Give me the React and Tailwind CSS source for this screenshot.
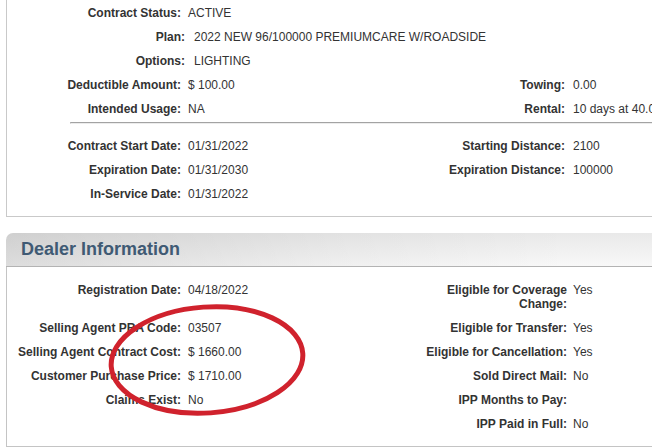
import React from "react";

const font = { fontFamily: '"Liberation Sans", Arial, sans-serif' };

function TopRow({ label, value, label2, value2, wide }) {
  return (
    <div className="flex h-[24px] items-start pt-[5px] leading-[14px] whitespace-nowrap">
      <div className={`${wide ? "w-[178px]" : "w-[174px]"} shrink-0 text-right font-bold`}>{label}</div>
      <div className={`${wide ? "w-[233px] pl-[9px]" : "w-[237px] pl-[7px]"} shrink-0`}>{value}</div>
      {label2 !== undefined && (
        <>
          <div className="w-[147px] shrink-0 text-right font-bold">{label2}</div>
          <div className="pl-[8px]">{value2}</div>
        </>
      )}
    </div>
  );
}

function DealerRow({ label, value, label2, value2 }) {
  return (
    <div className="flex items-start py-[5px] leading-[14px]">
      <div className="w-[174px] shrink-0 text-right font-bold whitespace-nowrap">{label}</div>
      <div className="w-[244px] shrink-0 pl-[7px] whitespace-nowrap">{value}</div>
      <div className="w-[142px] shrink-0 text-right font-bold">{label2}</div>
      <div className="pl-[6px] whitespace-nowrap">{value2}</div>
    </div>
  );
}

export default function App() {
  return (
    <div className="relative h-[448px] w-[652px] overflow-hidden bg-white text-[12px] text-[#333]" style={font}>
      <div className="w-[760px] pl-[6px]">
        {/* contract details panel */}
        <div className="border-b border-l border-[#c9c9c9] pt-[1px] pb-[10px]">
          <TopRow label="Contract Status:" value="ACTIVE" />
          <TopRow wide label="Plan:" value="2022 NEW 96/100000 PREMIUMCARE W/ROADSIDE" />
          <TopRow wide label="Options:" value="LIGHTING" />
          <TopRow label="Deductible Amount:" value="$ 100.00" label2="Towing:" value2="0.00" />
          <TopRow label="Intended Usage:" value="NA" label2="Rental:" value2="10 days at 40.00" />
          <div className="ml-[63px] mt-[1px] h-[2px] border-t border-l border-t-[#a3a3a3] border-l-[#c4c4c4] border-b border-b-[#ececec]" />
          <div className="h-[10px]" />
          <TopRow label="Contract Start Date:" value="01/31/2022" label2="Starting Distance:" value2="2100" />
          <TopRow label="Expiration Date:" value="01/31/2030" label2="Expiration Distance:" value2="100000" />
          <TopRow label="In-Service Date:" value="01/31/2022" />
        </div>

        {/* dealer panel */}
        <div className="mt-[16px]">
          <div className="flex h-[34px] items-center rounded-tl-[7px] border-b border-[#b3b3b3] bg-[linear-gradient(to_right,rgba(0,0,0,0.11),rgba(0,0,0,0.03)_45%,rgba(0,0,0,0)_75%),linear-gradient(to_bottom,#e9e9e9,#f8f8f8)] pl-[15px]">
            <span className="text-[18px] font-bold text-[#3f5a74]">Dealer Information</span>
          </div>
          <div className="h-[180px] border-b border-l border-[#c4c4c4] pt-[11px]">
            <DealerRow label="Registration Date:" value="04/18/2022" label2="Eligible for Coverage Change:" value2="Yes" />
            <DealerRow label="Selling Agent PRA Code:" value="03507" label2="Eligible for Transfer:" value2="Yes" />
            <DealerRow label="Selling Agent Contract Cost:" value="$ 1660.00" label2="Eligible for Cancellation:" value2="Yes" />
            <DealerRow label="Customer Purchase Price:" value="$ 1710.00" label2="Sold Direct Mail:" value2="No" />
            <DealerRow label="Claims Exist:" value="No" label2="IPP Months to Pay:" value2="" />
            <DealerRow label="" value="" label2="IPP Paid in Full:" value2="No" />
          </div>
        </div>
      </div>

      {/* hand-drawn highlight ring */}
      <svg className="pointer-events-none absolute left-[100px] top-[297px]" width="215" height="125" viewBox="0 0 215 125">
        <ellipse cx="107" cy="63" rx="96" ry="53" transform="rotate(-4 107 63)" fill="none" stroke="#d0222d" strokeWidth="5" />
      </svg>
    </div>
  );
}
